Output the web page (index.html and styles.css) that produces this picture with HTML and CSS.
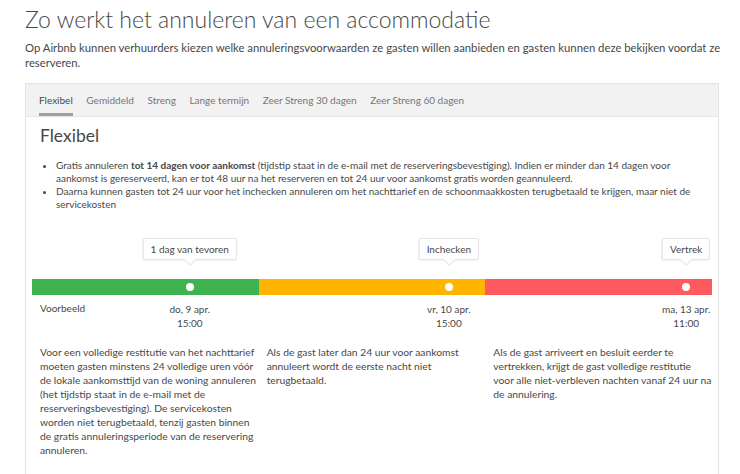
FILE: index.html
```html
<!DOCTYPE html>
<html lang="nl">
<head>
<meta charset="utf-8">
<title>Annuleren</title>
<link rel="stylesheet" href="styles.css">
</head>
<body>
<div class="page">
  <h1 class="title">Zo werkt het annuleren van een accommodatie</h1>
  <p class="intro">Op Airbnb kunnen verhuurders kiezen welke annuleringsvoorwaarden ze gasten willen aanbieden en gasten kunnen deze bekijken voordat ze<br>reserveren.</p>

  <div class="box">
    <nav class="tabs">
      <span class="tab active">Flexibel</span>
      <span class="tab">Gemiddeld</span>
      <span class="tab">Streng</span>
      <span class="tab">Lange termijn</span>
      <span class="tab">Zeer Streng 30 dagen</span>
      <span class="tab">Zeer Streng 60 dagen</span>
    </nav>
    <div class="panel">
      <h2 class="heading">Flexibel</h2>
      <ul class="bullets">
        <li>Gratis annuleren <b>tot 14 dagen voor aankomst</b> (tijdstip staat in de e-mail met de reserveringsbevestiging). Indien er minder dan 14 dagen voor aankomst is gereserveerd, kan er tot 48 uur na het reserveren en tot 24 uur voor aankomst gratis worden geannuleerd.</li>
        <li>Daarna kunnen gasten tot 24 uur voor het inchecken annuleren om het nachttarief en de schoonmaakkosten terugbetaald te krijgen, maar niet de servicekosten</li>
      </ul>

      <div class="timeline">
        <div class="tips">
          <span class="tip" style="left: 23.2%">1 dag van tevoren</span>
          <span class="tip" style="left: 61.3%">Inchecken</span>
          <span class="tip" style="left: 96.2%">Vertrek</span>
        </div>
        <div class="bar">
          <div class="seg green"></div>
          <div class="seg orange"></div>
          <div class="seg red"></div>
          <span class="dot" style="left: 23.2%"></span>
          <span class="dot" style="left: 61.3%"></span>
          <span class="dot" style="left: 96.2%"></span>
        </div>
        <div class="dates">
          <span class="example">Voorbeeld</span>
          <span class="date" style="left: 23.2%">do, 9 apr.<br>15:00</span>
          <span class="date" style="left: 61.3%">vr, 10 apr.<br>15:00</span>
          <span class="date" style="left: 96.2%">ma, 13 apr.<br>11:00</span>
        </div>
        <div class="desc">
          <p>Voor een volledige restitutie van het nachttarief<br>moeten gasten minstens 24 volledige uren vóór<br>de lokale aankomsttijd van de woning annuleren<br>(het tijdstip staat in de e-mail met de<br>reserveringsbevestiging). De servicekosten<br>worden niet terugbetaald, tenzij gasten binnen<br>de gratis annuleringsperiode van de reservering<br>annuleren.</p>
          <p>Als de gast later dan 24 uur voor aankomst<br>annuleert wordt de eerste nacht niet<br>terugbetaald.</p>
          <p>Als de gast arriveert en besluit eerder te<br>vertrekken, krijgt de gast volledige restitutie<br>voor alle niet-verbleven nachten vanaf 24 uur na<br>de annulering.</p>
        </div>
      </div>
    </div>
  </div>
</div>
</body>
</html>
```

FILE: styles.css
```css
* { box-sizing: border-box; }
html, body { margin: 0; padding: 0; background: #fff; }
body {
  font-family: "Lato", "Open Sans", sans-serif;
  color: #484848;
  overflow: hidden;
}
.page { padding: 3px 4px 0 25px; }
.title {
  font-size: 23px;
  font-weight: 300;
  margin: 0;
  line-height: 32px;
  color: #484848;
}
.intro {
  font-size: 11.3px;
  line-height: 15px;
  margin: 5px 0 0;
  color: #484848;
}
.box {
  margin: 13px 17px 0 0;
  border: 1px solid #e4e4e4;
  border-bottom: none;
}
.tabs {
  display: flex;
  gap: 13.6px;
  background: #f2f2f2;
  padding: 0 13px;
  height: 33px;
  border-bottom: 1px solid #e4e4e4;
}
.tab {
  font-size: 10px;
  color: #767676;
  display: flex;
  align-items: center;
  border-bottom: 3px solid transparent;
  padding-top: 2px;
}
.tab.active { color: #484848; border-bottom-color: #a0a0a0; }
.panel { padding: 8px 6px 20px; background: #fff; }
.heading {
  font-size: 17.5px;
  font-weight: 400;
  margin: 0 0 0 8px;
  line-height: 22px;
}
.bullets {
  margin: 12px 0 0;
  padding: 0 0 0 24px;
  font-size: 10px;
  line-height: 13px;
}
.bullets b { font-weight: 700; }
.timeline { margin-top: 27px; }
.tips { position: relative; height: 41px; }
.tip {
  position: absolute;
  top: 0;
  transform: translateX(-50%);
  font-size: 10px;
  line-height: 20px;
  padding: 0 7px;
  background: #fff;
  border: 1px solid #e4e4e4;
  border-radius: 2px;
  white-space: nowrap;
  box-shadow: 0 1px 2px rgba(0,0,0,.05);
}
.tip::after {
  content: "";
  position: absolute;
  left: 50%;
  bottom: -5px;
  width: 8px;
  height: 8px;
  margin-left: -4px;
  background: #fff;
  border-right: 1px solid #e4e4e4;
  border-bottom: 1px solid #e4e4e4;
  transform: rotate(45deg);
}
.bar {
  position: relative;
  display: grid;
  grid-template-columns: 1fr 1fr 1fr;
  height: 16px;
}
.seg.green { background: #3fb34f; }
.seg.orange { background: #ffb400; }
.seg.red { background: #ff5a5f; }
.dot {
  position: absolute;
  top: 4px;
  width: 8px;
  height: 8px;
  margin-left: -4px;
  border-radius: 50%;
  background: #fff;
}
.dates {
  position: relative;
  height: 44px;
  font-size: 10px;
  line-height: 14px;
}
.example { position: absolute; left: 8px; top: 6px; }
.date {
  position: absolute;
  top: 7px;
  transform: translateX(-50%);
  text-align: center;
  white-space: nowrap;
}
.desc {
  display: grid;
  grid-template-columns: repeat(3, minmax(0, 1fr));
  font-size: 10.3px;
  line-height: 14px;
  margin-top: 6px;
}
.desc p { margin: 0; padding: 0 0 0 8px; white-space: nowrap; }
```
